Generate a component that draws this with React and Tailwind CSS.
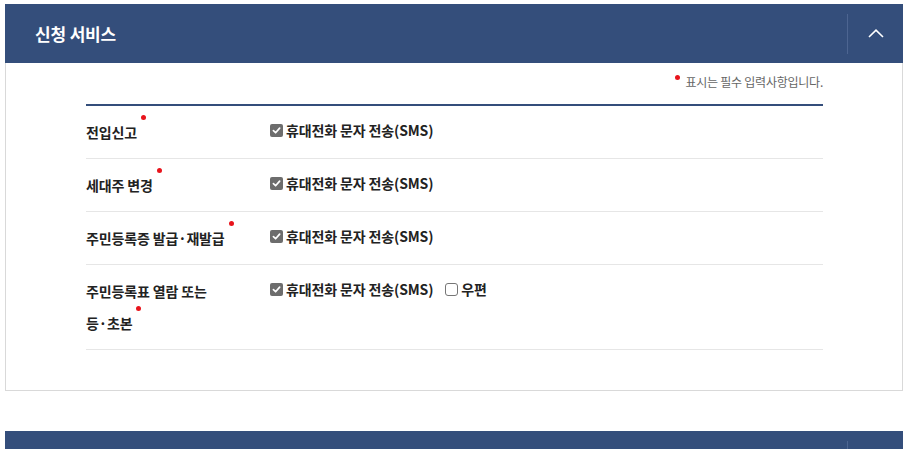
import React from "react";

const font = { fontFamily: '"Noto Sans CJK KR", "Noto Sans", sans-serif' };

function Dot({ className = "" }) {
  return (
    <span
      className={
        "inline-block w-[5px] h-[5px] rounded-full bg-[#e8141c] align-middle relative " +
        className
      }
    />
  );
}

function Check({ checked, label }) {
  return (
    <span className="inline-flex items-center gap-[3px]">
      {checked ? (
        <span className="w-[13px] h-[13px] rounded-[2px] bg-[#6d6d6d] flex items-center justify-center">
          <svg width="9" height="9" viewBox="0 0 10 10" fill="none">
            <path d="M1.6 5.2 L4 7.5 L8.5 2.4" stroke="#fff" strokeWidth="1.9" strokeLinecap="round" strokeLinejoin="round" />
          </svg>
        </span>
      ) : (
        <span className="w-[13px] h-[13px] rounded-[3px] border border-[#767676] bg-white" />
      )}
      <span className="text-[14px] font-bold text-[#222] tracking-[-0.01em]">{label}</span>
    </span>
  );
}

function Header({ title }) {
  return (
    <div className="h-[59px] bg-[#344e7b] flex items-center justify-between">
      <h2 className="pl-[30px] text-white text-[17px] font-bold tracking-[-0.01em]">{title}</h2>
      <div className="h-[40px] w-[56px] border-l border-[#4d6591] flex items-center justify-center">
        {title ? (
          <svg width="16" height="9" viewBox="0 0 16 9" fill="none">
            <path d="M1 8 L8 1.2 L15 8" stroke="#fff" strokeWidth="1.6" />
          </svg>
        ) : null}
      </div>
    </div>
  );
}

const rows = [
  { head: "", last: "전입신고", post: false },
  { head: "세대주 ", last: "변경", post: false },
  { head: "주민등록증 ", last: "발급·재발급", post: false },
  { head: "주민등록표 열람 또는 ", last: "등·초본", post: true },
];

export default function App() {
  return (
    <div className="bg-white h-[449px] px-[5px] pt-[4px] overflow-hidden" style={font}>
      <section>
        <Header title="신청 서비스" />
        <div className="border border-t-0 border-[#d9d9d9] pl-[80px] pr-[79px] pt-[9px] pb-[40px]">
          <p className="text-right text-[12px] leading-[20px] text-[#666] tracking-[-0.02em]">
            <Dot className="-top-[6px] mr-[5px]" />
            표시는 필수 입력사항입니다.
          </p>
          <div className="mt-[12px] border-t-2 border-[#344e7b]">
            {rows.map((r) => (
              <div key={r.last} className="flex border-b border-[#e6e6e6] py-[10px]">
                <div className="w-[184px] shrink-0 pr-[34px] text-[14px] leading-[32px] font-bold text-[#222] tracking-[-0.01em]">
                  {r.head}
                  <span className="whitespace-nowrap">
                    {r.last}
                    <Dot className="-top-[17px] ml-[4px]" />
                  </span>
                </div>
                <div className="flex items-center gap-[12px] h-[29px]">
                  <Check checked label="휴대전화 문자 전송(SMS)" />
                  {r.post && <Check checked={false} label="우편" />}
                </div>
              </div>
            ))}
          </div>
        </div>
      </section>
      <section className="mt-[40px]">
        <Header title="" />
      </section>
    </div>
  );
}
